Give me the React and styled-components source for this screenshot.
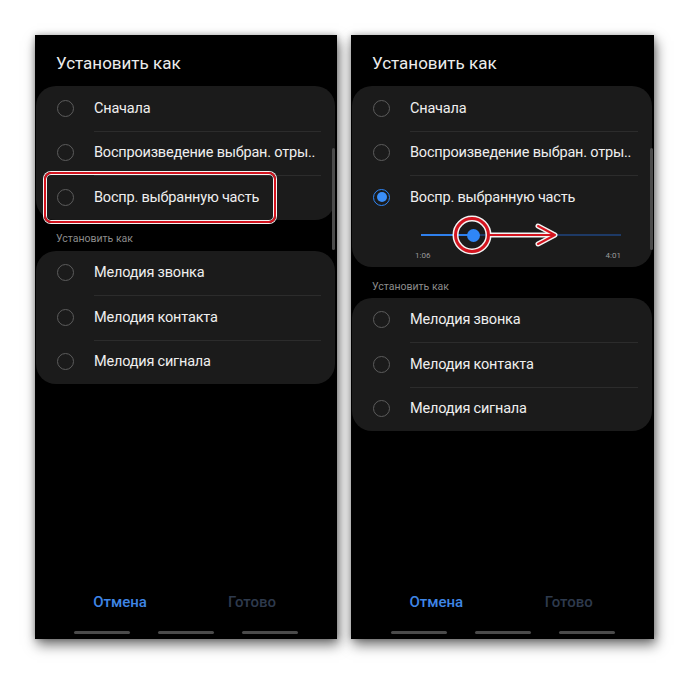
import React from "react";
import styled, { createGlobalStyle } from "styled-components";

const Global = createGlobalStyle`
  html, body { margin: 0; padding: 0; background: #fff; }
  body { font-family: Roboto, "Noto Sans", sans-serif; }
`;

const Page = styled.div`
  width: 690px;
  height: 675px;
  box-sizing: border-box;
  padding: 35px 0 0 35px;
  display: flex;
  gap: 14px;
  align-items: flex-start;
`;

const Phone = styled.div`
  position: relative;
  width: ${(p) => p.$w}px;
  height: 604px;
  background: #000;
  display: flex;
  flex-direction: column;
  box-shadow: 2px 6px 12px rgba(0, 0, 0, 0.55), 0 0 6px rgba(0, 0, 0, 0.25);
`;

const Title = styled.div`
  color: #ececec;
  font-size: 17px;
  padding: 18px 0 0 21px;
  height: 33px;
  line-height: 20px;
`;

const Card = styled.div`
  margin: 0 2px 0 1px;
  background: #1b1b1b;
  border-radius: 20px;
  display: flex;
  flex-direction: column;
`;

const Row = styled.div`
  position: relative;
  height: 44.5px;
  display: flex;
  align-items: center;
  padding-left: 21px;
  gap: 20px;
  &::before {
    content: "";
    display: ${(p) => (p.$divider ? "block" : "none")};
    position: absolute;
    top: 0;
    left: 58px;
    right: 14px;
    height: 1px;
    background: #2c2c2c;
  }
`;

const Radio = styled.span`
  box-sizing: border-box;
  width: 17px;
  height: 17px;
  flex: none;
  border-radius: 50%;
  border: 1.5px solid ${(p) => (p.$on ? "#2f86f6" : "#5c5c5c")};
  display: flex;
  align-items: center;
  justify-content: center;
  &::after {
    content: "";
    display: ${(p) => (p.$on ? "block" : "none")};
    width: 10px;
    height: 10px;
    border-radius: 50%;
    background: #3a8ef8;
  }
`;

const Label = styled.span`
  color: #efefef;
  font-size: 14.5px;
  letter-spacing: -0.2px;
  white-space: nowrap;
`;

const Section = styled.div`
  color: #8c8c8c;
  font-size: 10.5px;
  padding: ${(p) => p.$pad};
  padding-left: 21px;
  line-height: 13px;
`;

const SliderWrap = styled.div`
  position: relative;
  padding: 14px 31px 6px 63px;
`;

const Track = styled.div`
  display: flex;
  height: 2px;
  margin-left: 6px;
`;

const TrackPart = styled.div`
  height: 2px;
  background: ${(p) => p.$c};
  flex: ${(p) => p.$f};
`;

const Thumb = styled.div`
  position: absolute;
  left: 115px;
  top: 9px;
  width: 13px;
  height: 13px;
  border-radius: 50%;
  background: #2f86f6;
`;

const TimeRow = styled.div`
  display: flex;
  justify-content: space-between;
  margin-top: 15px;
  color: #9a9a9a;
  font-size: 8px;
  line-height: 10px;
`;

const Spacer = styled.div`
  flex: 1;
`;

const Buttons = styled.div`
  display: grid;
  grid-template-columns: 1fr 1fr;
  padding: 0 19px;
  text-align: center;
  font-size: 15px;
  font-weight: 500;
`;

const Btn = styled.span`
  color: ${(p) => (p.$dim ? "#2e3a4d" : "#3f86e6")};
`;

const NavBar = styled.div`
  display: flex;
  justify-content: center;
  gap: 28px;
  padding: 20px 0 5px;
`;

const NavLine = styled.div`
  width: 56px;
  height: 3px;
  border-radius: 2px;
  background: #4a4a4a;
`;

const ScrollBar = styled.div`
  position: absolute;
  left: ${(p) => p.$x}px;
  top: 113px;
  width: 3px;
  height: 102px;
  border-radius: 2px;
  background: #4b4b4b;
`;

const Highlight = styled.div`
  position: absolute;
  left: 9px;
  top: 137px;
  width: 232px;
  height: 51px;
  box-sizing: border-box;
  border: 2px solid #d3141f;
  border-radius: 7px;
  box-shadow: 0 0 0 1px #f4f4f4, inset 0 0 0 1px #f4f4f4;
`;

const Annot = styled.svg`
  position: absolute;
  left: 97px;
  top: 178px;
`;

const top = ["Сначала", "Воспроизведение выбран. отры..", "Воспр. выбранную часть"];
const bottom = ["Мелодия звонка", "Мелодия контакта", "Мелодия сигнала"];

function Footer() {
  return (
    <>
      <Spacer />
      <Buttons>
        <Btn>Отмена</Btn>
        <Btn $dim>Готово</Btn>
      </Buttons>
      <NavBar>
        <NavLine />
        <NavLine />
        <NavLine />
      </NavBar>
    </>
  );
}

function Items({ list, selected }) {
  return list.map((t, i) => (
    <Row key={t} $divider={i > 0}>
      <Radio $on={selected === i} />
      <Label>{t}</Label>
    </Row>
  ));
}

export default function App() {
  return (
    <>
      <Global />
      <Page>
        <Phone $w={302}>
          <Title>Установить как</Title>
          <Card>
            <Items list={top} />
          </Card>
          <Section $pad="12px 0 6px">Установить как</Section>
          <Card>
            <Items list={bottom} />
          </Card>
          <Footer />
          <ScrollBar $x={297} />
          <Highlight />
        </Phone>
        <Phone $w={303}>
          <Title>Установить как</Title>
          <Card>
            <Items list={top} selected={2} />
            <SliderWrap>
              <Track>
                <TrackPart $c="#2f80ed" $f={51} />
                <TrackPart $c="#1e3a66" $f={150} />
              </Track>
              <Thumb />
              <TimeRow>
                <span>1:06</span>
                <span>4:01</span>
              </TimeRow>
            </SliderWrap>
          </Card>
          <Section $pad="13px 0 5px">Установить как</Section>
          <Card>
            <Items list={bottom} />
          </Card>
          <Footer />
          <ScrollBar $x={299} />
          <Annot width="120" height="44" viewBox="0 0 120 44">
            <g fill="none" strokeLinecap="round" strokeLinejoin="round">
              <circle cx="24" cy="22" r="16.5" stroke="#f4f4f4" strokeWidth="6" />
              <line x1="42" y1="22" x2="106" y2="22" stroke="#f4f4f4" strokeWidth="5" />
              <polyline points="90,13 107,22 90,31" stroke="#f4f4f4" strokeWidth="5" />
              <circle cx="24" cy="22" r="16.5" stroke="#d3141f" strokeWidth="3" />
              <line x1="42" y1="22" x2="106" y2="22" stroke="#d3141f" strokeWidth="2" />
              <polyline points="90,13 107,22 90,31" stroke="#d3141f" strokeWidth="2" />
            </g>
          </Annot>
        </Phone>
      </Page>
    </>
  );
}
